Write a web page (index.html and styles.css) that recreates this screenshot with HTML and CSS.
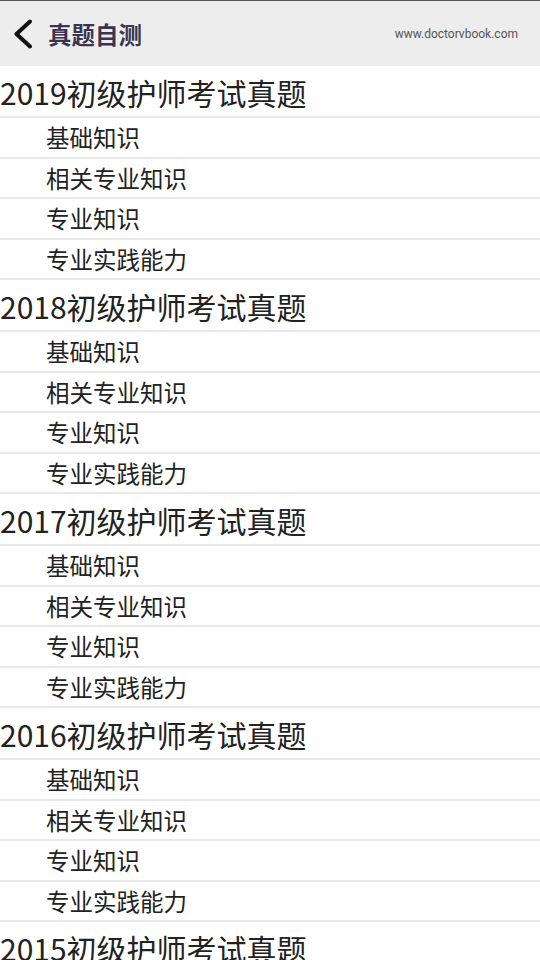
FILE: index.html
```html
<!DOCTYPE html>
<html lang="zh-CN">
<head>
  <meta charset="UTF-8">
  <meta name="viewport" content="width=device-width, initial-scale=1.0">
  <title>真题自测</title>
  <link rel="stylesheet" href="styles.css">
</head>
<body>

<!-- Top Bar -->
<div class="topbar">
  <div class="back">
    <svg width="22" height="30" viewBox="0 0 22 30"><path d="M18 2.5 L4.5 15 L18 27.5" fill="none" stroke="#111" stroke-width="4" stroke-linecap="round" stroke-linejoin="round"/></svg>
  </div>
  <div class="title">真题自测</div>
  <div class="site">www.doctorvbook.com</div>
</div>

<div class="list">
  <div class="group">
    <div class="group-title">2019初级护师考试真题</div>
    <div class="item">基础知识</div>
    <div class="item">相关专业知识</div>
    <div class="item">专业知识</div>
    <div class="item">专业实践能力</div>
  </div>
  <div class="group">
    <div class="group-title">2018初级护师考试真题</div>
    <div class="item">基础知识</div>
    <div class="item">相关专业知识</div>
    <div class="item">专业知识</div>
    <div class="item">专业实践能力</div>
  </div>
  <div class="group">
    <div class="group-title">2017初级护师考试真题</div>
    <div class="item">基础知识</div>
    <div class="item">相关专业知识</div>
    <div class="item">专业知识</div>
    <div class="item">专业实践能力</div>
  </div>
  <div class="group">
    <div class="group-title">2016初级护师考试真题</div>
    <div class="item">基础知识</div>
    <div class="item">相关专业知识</div>
    <div class="item">专业知识</div>
    <div class="item">专业实践能力</div>
  </div>
  <div class="group">
    <div class="group-title">2015初级护师考试真题</div>
  </div>
</div>

</body>
</html>
```

FILE: styles.css
```css
/* Global */
* {
  box-sizing: border-box;
  margin: 0;
  padding: 0;
}
body {
  font-family: "Noto Sans CJK SC", "Noto Sans", sans-serif;
  background-color: #fff;
  color: #222;
  width: 540px;
  height: 960px;
  overflow: hidden;
}

/* Top bar */
.topbar {
  height: 66px;
  background-color: #ededed;
  border-top: 1px solid #555;
  display: flex;
  align-items: center;
}
.back {
  width: 48px;
  padding-left: 12px;
  display: flex;
  align-items: center;
}
.title {
  font-size: 23.5px;
  font-weight: bold;
  color: #3a3450;
  flex: 1;
}
.site {
  font-family: Roboto, "Liberation Sans", sans-serif;
  font-size: 12px;
  color: #555;
  padding-right: 22px;
}

/* List */
.group-title {
  height: 52px;
  font-size: 30px;
  line-height: 50px;
  padding-top: 1px;
  border-bottom: 2px solid #e8e8e8;
  white-space: nowrap;
}
.item {
  height: 40.5px;
  line-height: 38.5px;
  font-size: 23.5px;
  padding-left: 46px;
  border-bottom: 2px solid #e8e8e8;
}
```
